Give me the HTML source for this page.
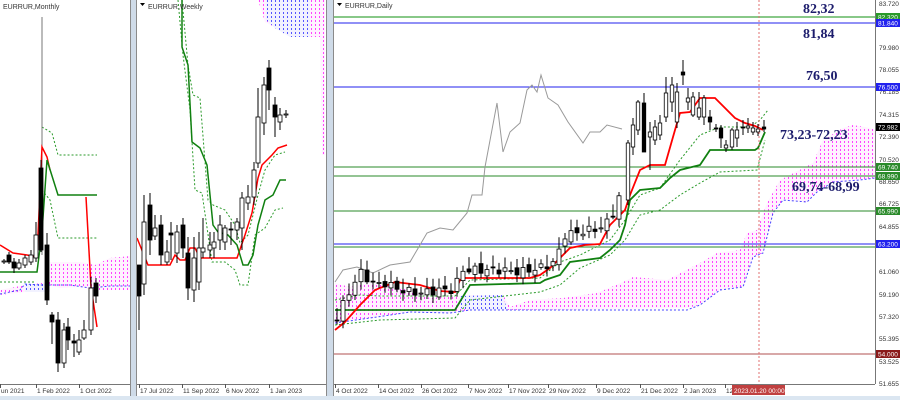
<!DOCTYPE html>
<html><head><meta charset="utf-8"><style>
html,body{margin:0;padding:0;width:900px;height:400px;overflow:hidden;background:#fff}
svg{display:block}
</style></head><body>
<svg id="s" width="900" height="400" xmlns="http://www.w3.org/2000/svg" style="font-family:'Liberation Sans',sans-serif">
<defs id="defs">
<clipPath id="cm"><rect x="0" y="0" width="130" height="384"/></clipPath>
<clipPath id="cw"><rect x="137" y="0" width="188" height="384"/></clipPath>
<clipPath id="cd"><rect x="334" y="0" width="541" height="384"/></clipPath>
</defs>
<rect width="900" height="400" fill="#fff"/>
<g id="gm" clip-path="url(#cm)"></g>
<g id="gw" clip-path="url(#cw)"></g>
<g id="gd" clip-path="url(#cd)"></g>
<g id="top"></g>
</svg>
<script>
const NS="http://www.w3.org/2000/svg";
function el(p,t,a,txt){const e=document.createElementNS(NS,t);for(const k in a)e.setAttribute(k,a[k]);if(txt!==undefined)e.textContent=txt;(typeof p==='string'?document.getElementById(p):p).appendChild(e);return e;}
function pl(p,pts,c,w,d){el(p,'polyline',{points:pts.map(q=>q.join(',')).join(' '),fill:'none',stroke:c,'stroke-width':w||1.5,'stroke-dasharray':d||'none'});}
let cid=0;
function hatch(p,pts,col,bg){cid++;const ps=pts.map(q=>q.join(',')).join(' ');const cp=el('defs','clipPath',{id:'hc'+cid});el(cp,'polygon',{points:ps});
 if(bg)el(p,'polygon',{points:ps,fill:bg});
 const xs=pts.map(q=>q[0]),ys=pts.map(q=>q[1]);const g=el(p,'g',{'clip-path':'url(#hc'+cid+')'});
 const x0=Math.min(...xs),x1=Math.max(...xs),y0=Math.min(...ys),y1=Math.max(...ys);
 for(let x=Math.floor(x0)+1;x<=x1;x+=4)for(let y=Math.floor(y0);y<=y1;y+=4)el(g,'rect',{x:x,y:y,width:1,height:2,fill:col});}
function candle(p,x,o,c,h,l,w){w=w||4;el(p,'line',{x1:x,y1:h,x2:x,y2:l,stroke:'#000','stroke-width':1});
 const t=Math.min(o,c),b=Math.max(o,c);const black=c>o;
 el(p,'rect',{x:x-w/2,y:t,width:w,height:Math.max(b-t,1),fill:black?'#000':'#fff',stroke:'#000','stroke-width':0.8});}
const PK='#ff44ff',PB='#fff2ff',BL='#5555ff',BB='#f2f2ff';

// ===== MONTHLY =====
hatch('gm',[[50,262],[80,262],[95,265],[110,258],[130,256],[130,290],[100,290],[80,287],[60,288],[50,285]],PK,PB);
hatch('gm',[[0,290],[25,285],[50,282],[50,292],[25,292],[0,295]],PK,PB);
hatch('gm',[[25,284],[50,284],[50,292],[25,292]],BL,BB);
pl('gm',[[0,294],[10,292],[20,290],[25,284],[40,285],[70,285],[90,288],[110,286],[130,286]],'#4444ff',1,'2,2');
pl('gm',[[0,282],[35,282]],'#2a9a2a',1,'2,2');
pl('gm',[[42,127],[52,133],[58,155],[97,155]],'#2a9a2a',1,'2,2');
pl('gm',[[42,190],[50,200],[58,238],[97,238]],'#2a9a2a',1,'2,2');
el('gm','line',{x1:42,y1:17,x2:42,y2:255,stroke:'#777','stroke-width':1});
pl('gm',[[0,245],[13,253],[27,255],[37,257],[42,147],[47,157],[50,170]],'#ff0000',1.5);
pl('gm',[[86,197],[91,287],[97,327]],'#ff0000',1.5);
pl('gm',[[0,272],[37,272],[42,232],[47,160],[58,195],[97,195]],'#108010',1.5);
[[4,262,261,259,264],[9,255,262,252,264],[14,262,268,258,273],[19,268,263,259,270],[25,265,258,255,268],[31,262,255,250,265],[36,258,235,222,262],[41,168,250,160,252],[47,245,300,233,305],[52,315,322,312,344],[58,320,363,312,372],[64,363,330,323,368],[68,327,340,318,350],[74,341,343,334,357],[79,352,340,330,355],[84,338,330,320,340],[91,330,288,277,335],[96,283,296,278,303]].forEach(c=>candle('gm',...c));
el('gm','text',{x:3,y:9,'font-size':7,fill:'#333'},'EURRUR,Monthly');

// ===== WEEKLY =====
hatch('gw',[[258,0],[325,0],[325,155],[322,155],[320,37],[310,37],[290,37],[280,30],[265,22],[262,12]],PK,PB);
hatch('gw',[[266,0],[310,0],[310,37],[290,37],[275,28],[266,20]],BL,BB);
pl('gw',[[182,0],[188,65],[193,95],[200,98],[208,200],[213,205],[225,210],[235,225],[240,243],[248,235],[258,195],[265,170],[275,155],[285,152]],'#2a9a2a',1,'2,2');
pl('gw',[[178,0],[183,55],[190,110],[195,190],[202,193],[212,262],[225,262],[235,270],[240,285],[248,285],[255,235],[265,228],[275,210],[283,208]],'#2a9a2a',1,'2,2');
pl('gw',[[137,238],[148,265],[170,265],[175,255],[180,260],[185,260],[190,248],[195,248],[200,258],[237,258],[245,235],[252,213],[258,178],[262,165],[272,155],[278,148],[287,145]],'#ff0000',1.5);
pl('gw',[[182,0],[182,47],[188,65],[192,142],[200,148],[207,165],[213,225],[218,232],[228,235],[237,245],[243,265],[248,265],[253,255],[258,225],[265,200],[273,195],[280,180],[286,180]],'#108010',1.5);
[[139,265,296,265,330],[144,284,222,195,295],[150,205,240,193,255],[155,236,228,215,240],[161,225,255,215,265],[167,262,252,240,265],[171,233,235,222,260],[177,253,232,225,263],[183,225,248,218,258],[188,253,288,237,300],[194,290,258,237,302],[199,282,248,232,290],[203,252,248,218,258],[210,250,245,232,258],[214,248,242,232,258],[220,240,225,215,250],[225,242,228,225,250],[231,229,230,222,245],[237,230,222,218,240],[242,228,198,192,250],[248,203,197,185,210],[254,197,170,162,205],[258,163,117,88,168],[264,123,85,77,135],[269,68,90,60,110],[275,105,117,97,137],[280,122,115,108,130],[286,114,114,110,118]].forEach(c=>candle('gw',...c));
el('gw','text',{x:148,y:9,'font-size':7,fill:'#333'},'EURRUR,Weekly');
el('gw','path',{d:'M140,3 l5,0 l-2.5,3z',fill:'#000'});

// ===== DAILY =====
const D='gd';
const cloud=[[335,283],[350,287],[370,283],[397,287],[410,290],[417,293],[430,298],[450,297],[470,295],[503,295],[510,307],[530,300],[563,298],[597,293],[623,282],[633,277],[667,280],[700,263],[717,253],[740,250],[747,233],[757,230],[767,203],[780,180],[813,163],[823,140],[843,128],[853,125],[870,128],[875,130],[875,178],[860,180],[833,182],[817,192],[807,202],[783,200],[773,213],[763,253],[753,257],[743,287],[720,290],[700,305],[687,308],[510,310],[470,310],[450,313],[410,312],[377,317],[335,323]];
hatch(D,cloud,PK,PB);
hatch(D,[[460,296],[503,295],[507,310],[470,310],[460,308]],BL,BB);
pl(D,[[335,323],[377,317],[410,312],[450,313],[470,310],[687,310],[700,305],[720,290],[743,287],[753,257],[763,253],[773,213],[783,200],[807,202],[817,192],[833,182],[860,180],[875,178]],'#4444ff',1,'2,2');
[[17,'#88c888',2],[23,'#2222ee',1],[87,'#2222ee',1],[167,'#2a8a2a',1],[176,'#2a8a2a',1],[211,'#2a8a2a',1],[244,'#2222ee',1],[247,'#2a8a2a',1],[354,'#b05050',1]].forEach(l=>el(D,'line',{x1:334,y1:l[0],x2:875,y2:l[0],stroke:l[1],'stroke-width':l[2]}));
pl(D,[[335,282],[343,270],[357,267],[373,273],[390,265],[410,262],[427,233],[440,228],[453,230],[467,213],[472,195],[482,195],[485,167],[497,103],[503,152],[510,132],[520,123],[527,90],[532,85],[537,92],[541,75],[548,98],[558,105],[568,122],[583,143],[590,132],[600,132],[607,125],[622,129]],'#999',1);
pl(D,[[335,300],[360,295],[380,296],[455,296],[470,280],[540,278],[560,262],[580,255],[610,240],[625,220],[640,195],[660,188],[680,160],[700,135],[720,127],[750,127],[760,120],[768,110]],'#2a9a2a',1,'2,2');
pl(D,[[335,325],[380,320],[455,318],[470,300],[540,292],[560,285],[580,268],[610,255],[625,240],[640,215],[660,210],[680,195],[700,183],[720,172],[757,170],[765,140]],'#2a9a2a',1,'2,2');
pl(D,[[335,310],[455,310],[470,285],[540,283],[545,280],[560,275],[570,262],[600,258],[610,250],[620,240],[625,225],[630,200],[640,190],[660,188],[670,178],[680,170],[700,165],[710,150],[755,150],[758,148],[765,132]],'#108010',1.8);
pl(D,[[335,330],[345,322],[360,305],[375,290],[395,282],[420,285],[440,291],[455,292],[460,280],[465,278],[530,278],[540,275],[550,268],[560,258],[570,248],[585,245],[600,244],[610,225],[620,215],[625,210],[630,195],[640,170],[650,165],[665,165],[675,130],[680,113],[690,112],[700,98],[715,98],[725,108],[735,118],[745,123],[755,126],[763,130]],'#ff0000',1.8);
const anc=[[337,318],[345,300],[360,272],[375,285],[385,283],[400,290],[420,293],[440,290],[455,290],[460,270],[480,270],[500,270],[520,272],[540,268],[555,262],[565,235],[580,232],[600,228],[610,220],[620,195]];
function cy(x){for(let i=0;i<anc.length-1;i++){if(x>=anc[i][0]&&x<=anc[i+1][0]){const t=(x-anc[i][0])/(anc[i+1][0]-anc[i][0]);return anc[i][1]+t*(anc[i+1][1]-anc[i][1]);}}return anc[anc.length-1][1];}
let prev=320,k=0;
for(let x=337;x<=622;x+=6){k++;const c=cy(x)+Math.sin(k*2.3)*4;const o=prev;const h=Math.min(o,c)-3-Math.abs(Math.sin(k*1.7))*9;const l=Math.max(o,c)+2+Math.abs(Math.cos(k*1.3))*6;candle(D,x,o,c,h,l,4);prev=c+Math.sin(k*3.1)*3;}
[[628,200,143,140,205],[633,147,125,118,155],[638,130,102,100,135],[644,103,152,93,152],[650,137,132,122,170],[655,140,127,120,145],[660,135,123,115,140],[666,117,93,77,122],[672,102,85,77,112],[677,122,92,83,128],[683,72,75,60,85],[688,102,98,88,110],[693,115,97,92,117],[699,117,108,92,120],[704,117,98,95,125],[710,117,122,110,130],[716,128,129,124,132],[721,128,138,125,148],[726,148,145,140,152],[732,147,130,128,150],[737,138,130,122,147],[743,127,128,120,135],[748,128,126,118,133],[753,132,128,122,135],[758,132,129,124,136],[764,127,129,120,132]].forEach(c=>candle(D,...c,3.5));
el(D,'line',{x1:759,y1:0,x2:759,y2:384,stroke:'#e07070','stroke-width':1,'stroke-dasharray':'2,2'});
[['82,32',803,13],['81,84',803,38],['76,50',806,80],['73,23-72,23',780,139],['69,74-68,99',792,191]].forEach(t=>el(D,'text',{x:t[1],y:t[2],style:"font-family:'Liberation Serif',serif;font-weight:bold;font-size:14px;fill:#1c1c6c"},t[0]));
el(D,'text',{x:345,y:8,'font-size':7,fill:'#333'},'EURRUR,Daily');
el(D,'path',{d:'M337,3 l5,0 l-2.5,3z',fill:'#000'});

// ===== frames/axes =====
const T='top';
el(T,'rect',{x:130,y:0,width:7,height:400,fill:'#cfdbe8'});
el(T,'rect',{x:326,y:0,width:8,height:400,fill:'#cfdbe8'});
[130,136,326,333].forEach(x=>el(T,'line',{x1:x+0.5,y1:0,x2:x+0.5,y2:396,stroke:'#8a8a8a','stroke-width':1}));
el(T,'line',{x1:875.5,y1:0,x2:875.5,y2:384,stroke:'#777','stroke-width':1});
el(T,'rect',{x:876,y:0,width:24,height:384,fill:'#fff'});
[[0,130],[137,326],[334,875]].forEach(r=>el(T,'line',{x1:r[0],y1:384.5,x2:r[1],y2:384.5,stroke:'#777'}));
el(T,'rect',{x:0,y:396,width:900,height:4,fill:'#dbe6f1'});
const af={'font-size':6.5,fill:'#333'};
[['un 2021',0],['1 Feb 2022',36],['1 Oct 2022',79],['17 Jul 2022',139],['11 Sep 2022',182],['6 Nov 2022',225],['1 Jan 2023',269],['4 Oct 2022',335],['14 Oct 2022',378],['26 Oct 2022',421],['7 Nov 2022',468],['17 Nov 2022',508],['29 Nov 2022',548],['9 Dec 2022',596],['21 Dec 2022',640],['2 Jan 2023',683],['12',725]].forEach(t=>{el(T,'text',Object.assign({x:t[1]+1,y:393},af),t[0]);el(T,'line',{x1:t[1]+0.5,y1:384,x2:t[1]+0.5,y2:388,stroke:'#555'});});
el(T,'rect',{x:732,y:385,width:53,height:10,fill:'#c04040'});
el(T,'text',{x:734,y:393,'font-size':6.5,fill:'#fff'},'2023.01.20 00:00');
[['83.720',4],['79.980',48],['78.055',70],['76.185',92],['74.315',115],['72.390',137],['70.520',160],['68.650',182],['66.725',204],['64.855',227],['61.060',272],['59.190',295],['57.320',317],['55.395',339],['53.525',362],['51.655',384]].forEach(t=>el(T,'text',Object.assign({x:879,y:t[1]+2},af),t[0]));
[['82.320',17,'#2a9a2a'],['81.840',23,'#2222ee'],['76.500',87,'#2222ee'],['72.982',127,'#000'],['69.740',167,'#2a8a2a'],['68.990',176,'#2a8a2a'],['65.990',211,'#2a8a2a'],['63.200',244,'#2222ee'],['54.000',354,'#8a1a1a']].forEach(t=>{el(T,'rect',{x:876,y:t[1]-4,width:24,height:8,fill:t[2]});el(T,'text',{x:878,y:t[1]+2.5,'font-size':6.5,fill:'#fff'},t[0]);});
</script>
</body></html>
